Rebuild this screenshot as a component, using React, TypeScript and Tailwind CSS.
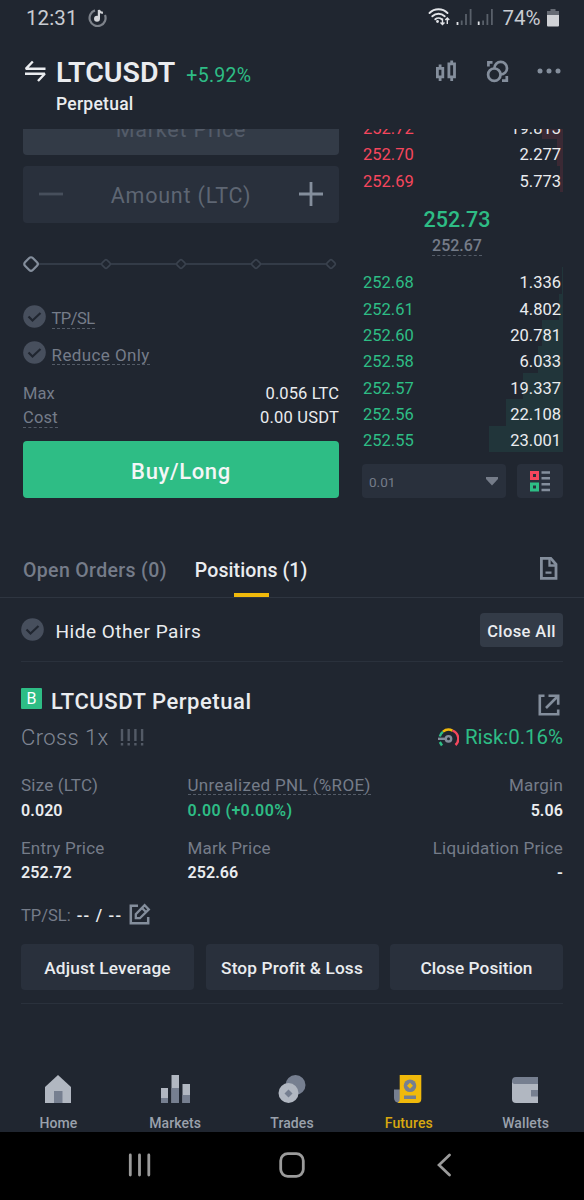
import type { ReactNode } from "react";
import clsx from "clsx";

const asks = [
  { price: "252.72", amount: "19.813", depth: 21 },
  { price: "252.70", amount: "2.277", depth: 6 },
  { price: "252.69", amount: "5.773", depth: 3 },
];

const bids = [
  { price: "252.68", amount: "1.336", depth: 1 },
  { price: "252.61", amount: "4.802", depth: 4 },
  { price: "252.60", amount: "20.781", depth: 21 },
  { price: "252.58", amount: "6.033", depth: 25 },
  { price: "252.57", amount: "19.337", depth: 40 },
  { price: "252.56", amount: "22.108", depth: 57 },
  { price: "252.55", amount: "23.001", depth: 74 },
];

export default function App() {
  return (
    <div className="flex h-[1200px] w-[584px] flex-col overflow-hidden bg-[#202630] font-['Roboto','Liberation_Sans',sans-serif] text-[#eaecef]">
      <StatusBar />
      <Header />
      <div className="flex h-[369px] shrink-0 justify-between overflow-hidden pl-[23px] pr-[21px]">
        <OrderForm />
        <OrderBook />
      </div>
      <Tabs />
      <HideRow />
      <Position />
      <BottomNav />
      <SystemNav />
    </div>
  );
}

function StatusBar() {
  return (
    <div className="flex h-9 shrink-0 items-center pl-[26px] pr-[25.5px] text-[#c9ccd2]">
      <span className="text-[20.5px] leading-9 tracking-[0.1px]">12:31</span>
      <svg className="ml-[10.5px] -mt-[1px]" width="20" height="20" viewBox="0 0 20 20" fill="none">
        <path d="M7 2.4A8 8 0 1 0 17 7" stroke="#7d828a" strokeWidth="2.2" />
        <circle cx="9" cy="10.8" r="3" fill="#d3d5d9" />
        <path d="M10.9 11V2c.5 1.8 1.6 2.6 4 2.9" stroke="#d3d5d9" strokeWidth="2.2" />
      </svg>
      <svg className="ml-auto" width="68" height="22" viewBox="0 0 68 22" fill="none">
        <g stroke="#e2e4e8" strokeWidth="1.9" strokeLinecap="round">
          <path d="M1.5 6C6.500 1 14.500 1 19.500 6" />
          <path d="M4.300 9.300c3.600-3.400 8.800-3.400 12.400 0" />
          <path d="M7.300 12.300c1.800-1.600 4.600-1.600 6.400 0" />
        </g>
        <circle cx="9.5" cy="14.5" r="1.4" fill="#e2e4e8" />
        <path d="M14.500 11.500v6M12.500 15.500l2 2 2-2M19.300 17v-6M17.300 13l2-2 2 2" stroke="#e2e4e8" strokeWidth="1.4" />
        <g fill="#59606a">
          <path d="M32.800 13.500h1.800V18h-1.800zM37.100 7h1.800v11h-1.800zM41.700 2h1.800v16h-1.800z" />
          <path d="M54.200 13.500H56V18h-1.800zM58.500 7h1.800v11h-1.800zM63 2h1.800v16H63z" />
        </g>
        <path d="M28.600 15h1.800v3h-1.800zM49.800 14.500h1.800V18h-1.800z" fill="#e2e4e8" />
      </svg>
      <span className="ml-[6px] text-[20.5px] leading-9">74%</span>
      <svg className="ml-[6px] -mt-[1px]" width="12" height="18" viewBox="0 0 12 18">
        <path d="M3.500 0h5v2H12v4H0V2h3.500z" fill="#666b74" />
        <path d="M0 6h12v10.500a1 1 0 0 1-1 1H1a1 1 0 0 1-1-1z" fill="#d0d2d6" />
      </svg>
    </div>
  );
}

function Header() {
  return (
    <div className="flex h-[93px] shrink-0 pl-[24px] pr-[23px] pt-[20px]">
      <svg className="mt-[4px] shrink-0" width="23" height="23" viewBox="0 0 23 23" fill="none" stroke="#eaecef" strokeWidth="2.4" strokeLinejoin="bevel">
        <path d="M21.500 8.800H1.800L8.800 1.500M1 13.800h19.800L14 21" />
      </svg>
      <div className="ml-[9px]">
        <div className="flex h-8 items-center pt-[1px]">
          <span className="text-[28.5px] font-semibold leading-8">LTCUSDT</span>
          <span className="ml-[11px] mt-[6px] text-[19.5px] leading-6 tracking-[0.3px] text-[#2ebd85]">+5.92%</span>
        </div>
        <div className="mt-[4px] text-[17.5px] font-medium leading-6 tracking-[0.25px]">Perpetual</div>
      </div>
      <div className="ml-auto flex h-[30px] items-center text-[#848e9c]">
        <svg width="22" height="22" viewBox="0 0 22 22" fill="none" stroke="currentColor" strokeWidth="2.8">
          <path d="M1.400 8.400h5.400v8.400H1.400zM4.100 4.500v4M4.100 17v4M12.900 3.900h5.600v13h-5.600zM15.700.5V4M15.700 17v4" />
        </svg>
        <svg className="ml-[28px]" width="24" height="23" viewBox="0 0 24 23" fill="none" stroke="currentColor" strokeWidth="2.7">
          <circle cx="14.7" cy="8.2" r="6.3" />
          <circle cx="8.3" cy="14.7" r="6.2" fill="#202630" />
          <path d="M6.500 2.400H2.400v4M16 20.600h4.800v-4.500" />
        </svg>
        <svg className="ml-[27px]" width="24" height="6" viewBox="0 0 24 6" fill="currentColor">
          <circle cx="3" cy="3" r="2.5" />
          <circle cx="12" cy="3" r="2.5" />
          <circle cx="21" cy="3" r="2.5" />
        </svg>
      </div>
    </div>
  );
}

function OrderForm() {
  return (
    <div className="flex w-[316px] flex-col">
      <div className="h-[25.5px] shrink-0 overflow-hidden rounded-b-[4px] bg-[#333b47]">
        <div className="-mt-[9px] text-center text-[21.5px] leading-[20px] tracking-[0.8px] text-[#545c69]">Market Price</div>
      </div>
      <div className="mt-[11.5px] flex h-[56.5px] shrink-0 items-center justify-between rounded-[4px] bg-[#29303c] px-[16px]">
        <svg width="24" height="24" viewBox="0 0 24 24" stroke="#474f5c" strokeWidth="2.8">
          <path d="M0 12h24" />
        </svg>
        <span className="mt-[4px] text-[21.5px] tracking-[0.8px] text-[#5e6673]">Amount (LTC)</span>
        <svg width="24" height="24" viewBox="0 0 24 24" stroke="#848e9c" strokeWidth="2.8">
          <path d="M0 12h24M12 0v24" />
        </svg>
      </div>
      <svg className="mt-[31px] shrink-0" width="316" height="20" viewBox="0 0 316 20" fill="#202630">
        <path d="M8 10h300" stroke="#333b47" strokeWidth="2" />
        {[83, 158, 233, 308].map((x) => (
          <rect key={x} x={x - 3.5} y="6.5" width="7" height="7" rx="1.5" transform={`rotate(45 ${x} 10)`} stroke="#3a424e" strokeWidth="1.6" />
        ))}
        <rect x="2.5" y="4.5" width="11" height="11" rx="2.5" transform="rotate(45 8 10)" stroke="#848e9c" strokeWidth="2.2" />
      </svg>
      <div className="mt-[31px] flex h-[23px] shrink-0">
        <CheckDot />
        <Dashed className="ml-[5.5px] mt-[4px] h-[20px] text-[16.5px] leading-[20px] tracking-[-0.5px]">TP/SL</Dashed>
      </div>
      <div className="mt-[13.5px] flex h-[23px] shrink-0">
        <CheckDot />
        <Dashed className="ml-[5.5px] mt-[4px] h-[20px] text-[17px] leading-[20px] tracking-[0.4px]">Reduce Only</Dashed>
      </div>
      <div className="mt-[18px] flex h-6 items-center justify-between text-[16.5px]">
        <span className="tracking-[0.1px] text-[#757c89]">Max</span>
        <span className="tracking-[0.1px]">0.056 LTC</span>
      </div>
      <div className="flex h-6 items-center justify-between text-[16.5px]">
        <Dashed className="h-[20px] leading-[20px] tracking-[0.2px]">Cost</Dashed>
        <span className="tracking-[0.2px]">0.00 USDT</span>
      </div>
      <button className="mt-auto h-[57px] shrink-0 rounded-[4px] bg-[#2ebd85] pt-[4px] text-[22px] font-medium tracking-[0.65px] text-[#f4f6f7]">
        Buy/Long
      </button>
    </div>
  );
}

function OrderBook() {
  return (
    <div className="flex w-[201px] flex-col">
      <div className="-mt-[16px]">
        {asks.map((row) => (
          <BookRow key={row.price} {...row} side="ask" />
        ))}
      </div>
      <div className="flex flex-col items-center pr-[11px] pt-[14px]">
        <span className="text-[21.5px] font-medium leading-7 text-[#2ebd85]">252.73</span>
        <Dashed className="mt-[3px] h-[19px] text-[16px] font-medium leading-[18px]">252.67</Dashed>
      </div>
      <div className="mt-[11px]">
        {bids.map((row) => (
          <BookRow key={row.price} {...row} side="bid" />
        ))}
      </div>
      <div className="mt-auto flex h-[34px] shrink-0 justify-between">
        <div className="flex w-[144px] items-center justify-between rounded-[4px] bg-[#29303c] pl-[7px] pr-[8px]">
          <span className="mt-[2px] text-[13.5px] text-[#757c89]">0.01</span>
          <svg width="12" height="9" viewBox="0 0 12 9" fill="#757c89">
            <path d="M0 0h12v2L6 8.500 0 2z" />
          </svg>
        </div>
        <div className="flex w-[46px] items-center justify-center rounded-[4px] bg-[#29303c]">
          <svg width="20" height="21" viewBox="0 0 20 21" fill="none">
            <path d="M1.500 1.500h6v6h-6z" stroke="#f6465d" strokeWidth="3" />
            <path d="M1.500 13h6v6h-6z" stroke="#2ebd85" strokeWidth="3" />
            <path d="M11.500 1.500H20M11.500 7.200H20M11.500 13.200H20M11.500 19H20" stroke="#848e9c" strokeWidth="2.6" />
          </svg>
        </div>
      </div>
    </div>
  );
}

function BookRow({ price, amount, depth, side }: { price: string; amount: string; depth: number; side: "ask" | "bid" }) {
  return (
    <div className="relative flex h-[26.4px] items-center justify-between pl-[1px] pr-[2px] pt-[5.5px] text-[16.5px] leading-5">
      <div className={clsx("absolute inset-y-0 right-0", side === "ask" ? "bg-[#3b2934]" : "bg-[#21353a]")} style={{ width: depth }} />
      <span className={side === "ask" ? "text-[#f6465d]" : "text-[#2ebd85]"}>{price}</span>
      <span className="relative">{amount}</span>
    </div>
  );
}

function Tabs() {
  return (
    <div className="flex h-[100px] shrink-0 items-end border-b border-[#2e3540] pl-[23px] pr-[26px] text-[19.5px] font-medium">
      <span className="pb-[14px] leading-6 tracking-[0.35px] text-[#757c89]">Open Orders (0)</span>
      <div className="ml-[28px] flex flex-col items-center">
        <span className="leading-6 tracking-[0.1px]">Positions (1)</span>
        <div className="mt-[10px] h-[4px] w-[35px] bg-[#f0b90b]" />
      </div>
      <svg className="mb-[17px] ml-auto" width="18" height="23" viewBox="0 0 18 23" fill="none" stroke="#848e9c" strokeWidth="2.8">
        <path d="M1.400 1.400h9.400l5.200 5.800v14.200H1.400z" />
        <path d="M9.500 1.500v7h6.500M5.500 15.700h6" strokeWidth="2.3" />
      </svg>
    </div>
  );
}

function HideRow() {
  return (
    <div className="ml-[21px] mr-[21px] flex h-[64px] shrink-0 items-center border-b border-[#2a313c]">
      <CheckDot />
      <span className="ml-[11.5px] mt-[5px] text-[19px] tracking-[0.5px]">Hide Other Pairs</span>
      <button className="ml-auto h-[34px] w-[83px] rounded-[4px] bg-[#333b47] pt-[5px] text-[16.5px] font-medium leading-5 tracking-[0.4px]">Close All</button>
    </div>
  );
}

function Position() {
  return (
    <div className="mx-[21px] flex h-[342px] shrink-0 flex-col border-b border-[#2a313c]">
      <div className="mt-[24px] flex h-[28px] items-center">
        <div className="mb-[3px] flex size-[21px] items-center justify-center rounded-[1px] bg-[#2ebd85] text-[16px] text-white">B</div>
        <span className="ml-[9px] mt-[2px] text-[22px] font-medium tracking-[0.55px]">LTCUSDT Perpetual</span>
        <svg className="ml-auto mr-[3px] mt-[9px]" width="22" height="22" viewBox="0 0 22 22" fill="none" stroke="#848e9c" strokeWidth="2.6">
          <path d="M6.500 1.800H1.800v18.400h18.400v-4.700M10.500 1.800h9.700v9M19.500 2.500 8 14" />
        </svg>
      </div>
      <div className="mt-[10px] flex h-[26px] items-center text-[22px] text-[#757c89]">
        <span className="font-light tracking-[0.4px] text-[#808794]">Cross 1x</span>
        <svg className="ml-[11px]" width="25" height="17" viewBox="0 0 25 17" stroke="#535a66" strokeWidth="2.4">
          <path d="M2 0v12M8.700 0v12M15.400 0v12M22.100 0v12M2 14v2.500M8.700 14v2.500M15.400 14v2.500M22.100 14v2.500" />
        </svg>
        <svg className="ml-auto" width="21" height="19" viewBox="0 0 21 19" fill="none" strokeWidth="2.4">
          <path d="M1.800 8.500A8.800 8.800 0 0 1 5 3.700" stroke="#2ebd85" />
          <path d="M5 3.700A8.600 8.600 0 0 1 14.500 2.600" stroke="#f0b90b" />
          <path d="M14.500 2.600A8.600 8.600 0 0 1 17.500 17" stroke="#f6465d" />
          <path d="M1.800 14l2.200 3.500" stroke="#2ebd85" />
          <circle cx="10.5" cy="10.8" r="2.7" stroke="#848e9c" />
          <path d="M0 10.800h8" stroke="#848e9c" />
        </svg>
        <span className="ml-[6px] mt-[1px] text-[20.5px] tracking-[-0.05px] text-[#2ebd85]">Risk:0.16%</span>
      </div>
      <div className="mt-[23px] grid grid-cols-[166.5px_1fr_auto] gap-y-[13px]">
        <Stat label="Size (LTC)" value="0.020" />
        <Stat label={<Dashed className="h-[22px] leading-6 tracking-[0.35px]">Unrealized PNL (%ROE)</Dashed>} value="0.00 (+0.00%)" valueClass="text-[#2ebd85] tracking-[0.4px]" />
        <Stat label="Margin" value="5.06" className="text-right" />
        <Stat label="Entry Price" value="252.72" />
        <Stat label="Mark Price" value="252.66" />
        <Stat label="Liquidation Price" value="-" className="text-right" />
      </div>
      <div className="mt-[19px] flex h-[24px] items-center text-[16.5px]">
        <span className="text-[#757c89]">TP/SL:</span>
        <span className="ml-[6px] font-medium tracking-[1.2px]">-- / --</span>
        <svg className="-mt-[4px] ml-[7px]" width="22" height="22" viewBox="0 0 22 22" fill="none" stroke="#848e9c" strokeWidth="2.5">
          <path d="M9 2.800H1.800v17.400h17.400V14" />
          <path d="M6.800 15.200v-4l8.800-9 4.200 4.200-8.900 8.800zM13 5l4 4" strokeWidth="2.3" />
        </svg>
      </div>
      <div className="mt-auto mb-[13px] grid h-[46px] grid-cols-3 gap-[11.5px] text-[17.25px] font-medium tracking-[0.15px]">
        <button className="rounded-[4px] bg-[#29303c] pt-[3px]">Adjust Leverage</button>
        <button className="rounded-[4px] bg-[#29303c] pt-[3px]">Stop Profit &amp; Loss</button>
        <button className="rounded-[4px] bg-[#29303c] pt-[3px] tracking-[0.05px]">Close Position</button>
      </div>
    </div>
  );
}

function Stat({ label, value, className, valueClass = "tracking-[0.1px]" }: { label: ReactNode; value: string; className?: string; valueClass?: string }) {
  return (
    <div className={className}>
      <div className="h-[24.5px] text-[17px] leading-[24.5px] tracking-[0.2px] text-[#757c89]">{label}</div>
      <div className={clsx("h-[25px] text-[16px] font-semibold leading-[25px]", valueClass)}>{value}</div>
    </div>
  );
}

function BottomNav() {
  return (
    <div className="flex h-[128px] shrink-0 items-end text-[14px] font-medium text-[#9aa1ac]">
      <NavItem label="Home">
        <path d="M14 0 27 12v16H1V12z" fill="#b1b7c1" />
        <path d="M10 16h8.500v12H10z" fill="#767f90" />
      </NavItem>
      <NavItem label="Markets">
        <path d="M0 13h7v15H0zM10.500 0H18v28h-7.500zM21.500 9H29v19h-7.500z" fill="#b1b7c1" />
        <path d="M0 23h7v5H0zM10.500 13H18v15h-7.500zM21.500 20H29v8h-7.500z" fill="#767f90" />
      </NavItem>
      <NavItem label="Trades">
        <circle cx="18.5" cy="10" r="10" fill="#767f90" />
        <circle cx="11.5" cy="18" r="10" fill="#b1b7c1" />
        <path d="m11.500 14.500 4 4-4 4-4-4z" fill="#767f90" />
      </NavItem>
      <NavItem label="Futures" active>
        <path d="M0 14.500h7V28H5a5 5 0 0 1-5-5z" fill="#767f90" />
        <path d="M5.700 0h21.600v24a4 4 0 0 1-4 4H3.700a4 4 0 0 0 2-4z" fill="#f0b90b" />
        <circle cx="16" cy="10.7" r="6.3" fill="#767f90" />
        <path d="m16 7.700 3 3-3 3-3-3z" fill="#f0b90b" />
        <path d="M10 20.500h12V24H10z" fill="#767f90" />
      </NavItem>
      <NavItem label="Wallets">
        <path d="M1 5h26v23H5a4 4 0 0 1-4-4z" fill="#b1b7c1" />
        <path d="M5 2h22v7H3a3 3 0 0 1-2-3 4 4 0 0 1 4-4zM20 15h7v6.500h-7z" fill="#767f90" />
      </NavItem>
    </div>
  );
}

function NavItem({ label, active, children }: { label: string; active?: boolean; children: ReactNode }) {
  return (
    <div className={clsx("flex flex-1 flex-col items-center", active && "text-[#d9a80f]")}>
      <svg width="29" height="28" viewBox="0 0 29 28">{children}</svg>
      <span className="mt-[11px] h-[18px] leading-[18px] tracking-[0.1px]">{label}</span>
    </div>
  );
}

function SystemNav() {
  return (
    <div className="flex h-[68px] shrink-0 items-center bg-black pl-[128px] pb-[3px]">
      <svg width="23" height="24" viewBox="0 0 23 24" stroke="#9b9b9b" strokeWidth="2.8" strokeLinecap="round">
        <path d="M2.300 2v20M11.500 2v20M20.800 2v20" />
      </svg>
      <svg className="ml-[128px]" width="26" height="26" viewBox="0 0 26 26" fill="none">
        <rect x="1.7" y="1.7" width="22.6" height="22.6" rx="7" stroke="#9b9b9b" strokeWidth="2.8" />
      </svg>
      <svg className="ml-[132px]" width="14" height="24" viewBox="0 0 14 24" fill="none" stroke="#9b9b9b" strokeWidth="2.7" strokeLinecap="round">
        <path d="M12.500 2 2 12l10.500 10" />
      </svg>
    </div>
  );
}

function CheckDot() {
  return (
    <svg className="shrink-0" width="23" height="23" viewBox="0 0 23 23" fill="none">
      <circle cx="11.5" cy="11.5" r="11.3" fill="#474f5d" />
      <path d="m5.500 11.500 4 4L17.500 8" stroke="#202630" strokeWidth="2.2" />
    </svg>
  );
}

function Dashed({ className, children }: { className?: string; children: ReactNode }) {
  return <span className={clsx("inline-block whitespace-nowrap border-b border-dashed border-[#535b67] text-[#757c89]", className)}>{children}</span>;
}
